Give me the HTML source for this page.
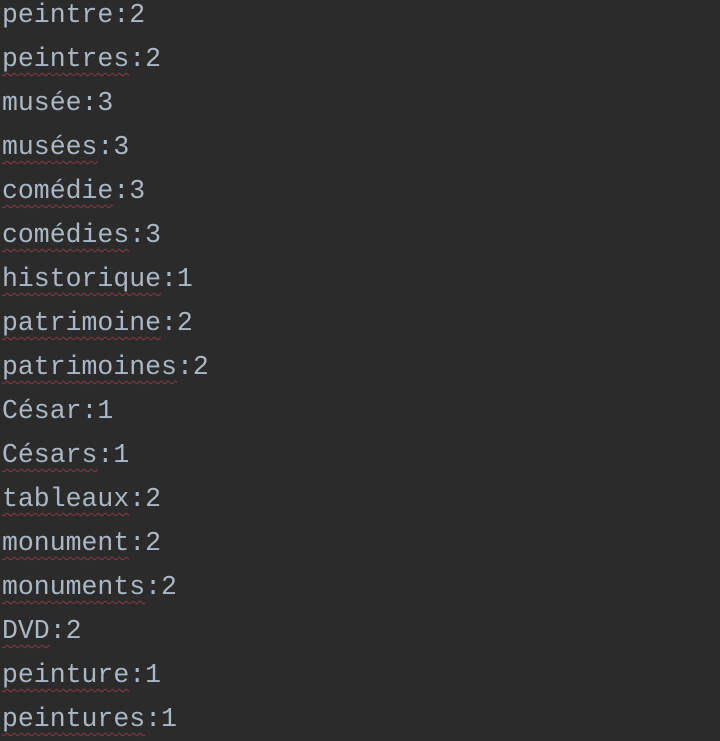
<!DOCTYPE html>
<html><head><meta charset="utf-8"><style>
html,body{margin:0;padding:0;background:#2b2b2b;width:720px;height:734px;overflow:hidden}
.c{position:absolute;left:2px;top:-7px;font-family:"Liberation Mono","DejaVu Sans Mono",monospace;font-size:26.5px;line-height:44px;color:#a9b7c6;white-space:pre}
.u{text-decoration:underline wavy #8e3a3a;text-decoration-thickness:1px;text-underline-offset:6px}
</style></head><body><div class="c">peintre:2
<span class="u">peintres</span>:2
musée:3
<span class="u">musées</span>:3
<span class="u">comédie</span>:3
<span class="u">comédies</span>:3
<span class="u">historique</span>:1
<span class="u">patrimoine</span>:2
<span class="u">patrimoines</span>:2
César:1
<span class="u">Césars</span>:1
<span class="u">tableaux</span>:2
<span class="u">monument</span>:2
<span class="u">monuments</span>:2
<span class="u">DVD</span>:2
<span class="u">peinture</span>:1
<span class="u">peintures</span>:1</div></body></html>
